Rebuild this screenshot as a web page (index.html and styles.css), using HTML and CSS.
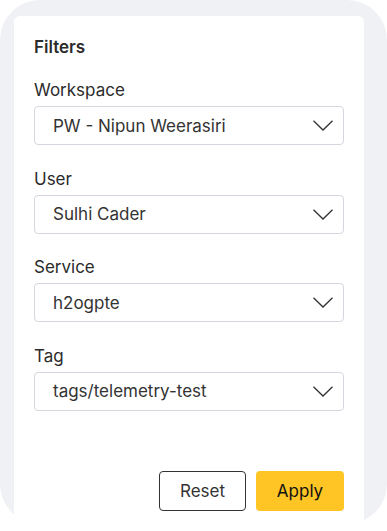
FILE: index.html
```html
<!DOCTYPE html>
<html lang="en">
<head>
    <meta charset="UTF-8">
    <meta name="viewport" content="width=device-width, initial-scale=1.0">
    <title>Filters</title>
    <link rel="stylesheet" href="styles.css">
</head>
<body>
    <div class="shell">
        <div class="card">
            <h2 class="title">Filters</h2>

            <div class="field">
                <label>Workspace</label>
                <div class="select">
                    <span>PW - Nipun Weerasiri</span>
                    <svg class="chev" width="20" height="11" viewBox="0 0 20 11"><path d="M0.5 0.7 L10 10 L19.5 0.7" /></svg>
                </div>
            </div>

            <div class="field">
                <label>User</label>
                <div class="select">
                    <span>Sulhi Cader</span>
                    <svg class="chev" width="20" height="11" viewBox="0 0 20 11"><path d="M0.5 0.7 L10 10 L19.5 0.7" /></svg>
                </div>
            </div>

            <div class="field">
                <label>Service</label>
                <div class="select">
                    <span>h2ogpte</span>
                    <svg class="chev" width="20" height="11" viewBox="0 0 20 11"><path d="M0.5 0.7 L10 10 L19.5 0.7" /></svg>
                </div>
            </div>

            <div class="field">
                <label>Tag</label>
                <div class="select">
                    <span>tags/telemetry-test</span>
                    <svg class="chev" width="20" height="11" viewBox="0 0 20 11"><path d="M0.5 0.7 L10 10 L19.5 0.7" /></svg>
                </div>
            </div>

            <div class="actions">
                <button class="btn btn-reset">Reset</button>
                <button class="btn btn-apply">Apply</button>
            </div>
        </div>
    </div>
</body>
</html>
```

FILE: styles.css
```css
body { margin: 0; background: #fff; font-family: Inter, "Noto Sans", sans-serif; color: #2b2b2b; }
.shell { height: 524px; background: #f0f1f5; border-radius: 40px; padding: 16px 23px 0 14px; box-sizing: border-box; }
.card { height: 100%; background: #fff; border-radius: 6px 6px 0 0; padding: 19px 20px 0 20px; box-sizing: border-box; }
.title { margin: 0 0 20px; font-size: 17px; font-weight: 600; line-height: 24px; color: #2b2b2b; }
.field { margin-bottom: 22.5px; }
.field label { display: block; font-size: 17px; line-height: 22px; margin-bottom: 5px; }
.select { height: 39px; border: 1px solid #d6d7de; border-radius: 4px; box-sizing: border-box; display: flex; align-items: center; justify-content: space-between; padding: 0 10px 0 18px; font-size: 17px; color: #333; }
.chev { fill: none; stroke: #333; stroke-width: 1.3; }
.actions { display: flex; justify-content: flex-end; gap: 10px; margin-top: 60.5px; }
.btn { height: 40px; font-family: inherit; font-size: 17px; border-radius: 4px; cursor: pointer; padding: 0; }
.btn-reset { width: 87px; background: #fff; border: 1px solid #333; color: #333; }
.btn-apply { width: 88px; background: #fec524; border: none; color: #111; }
```
